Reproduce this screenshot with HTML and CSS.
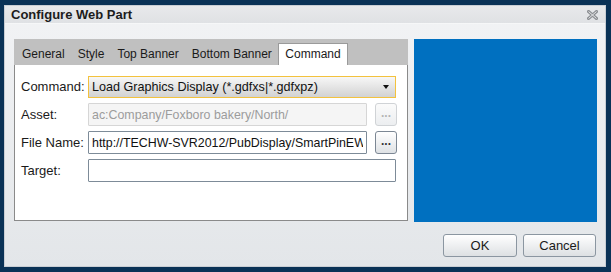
FILE: index.html
```html
<!DOCTYPE html>
<html>
<head>
    <link rel="stylesheet" href="styles.css">
</head>
<body>
    <div class="dialog">
        <div class="titlebar">
            <span class="title">Configure Web Part</span>
            <svg class="close" width="11" height="10" viewBox="0 0 11 10">
                <path d="M1.5 1.5 L9.5 8.5 M9.5 1.5 L1.5 8.5" stroke="#8c8f93" stroke-width="3" stroke-linecap="square"/>
                <path d="M1.5 1.5 L9.5 8.5 M9.5 1.5 L1.5 8.5" stroke="#e4e5e7" stroke-width="1"/>
            </svg>
        </div>
        <div class="body">
            <div class="main">
                <div class="tabs">
                    <div class="tabbar">
                        <span class="tab">General</span>
                        <span class="tab">Style</span>
                        <span class="tab">Top Banner</span>
                        <span class="tab">Bottom Banner</span>
                        <span class="tab active">Command</span>
                    </div>
                    <div class="panel">
                        <div class="row">
                            <label>Command:</label>
                            <div class="select">
                                <span>Load Graphics Display (*.gdfxs|*.gdfxpz)</span>
                                <span class="arrow"></span>
                            </div>
                        </div>
                        <div class="row">
                            <label>Asset:</label>
                            <input type="text" class="field short" value="ac:Company/Foxboro bakery/North/" disabled>
                            <button type="button" class="dots" disabled>...</button>
                        </div>
                        <div class="row">
                            <label>File Name:</label>
                            <input type="text" class="field short" value="http://TECHW-SVR2012/PubDisplay/SmartPinEW">
                            <button type="button" class="dots">...</button>
                        </div>
                        <div class="row">
                            <label>Target:</label>
                            <input type="text" class="field" value="">
                        </div>
                    </div>
                </div>
                <div class="preview"></div>
            </div>
            <div class="footer">
                <button type="button" class="btn ok">OK</button>
                <button type="button" class="btn cancel">Cancel</button>
            </div>
        </div>
    </div>
</body>
</html>
```

FILE: styles.css
```css
body {
    font-family: "Liberation Sans", Arial, sans-serif;
    background-color: #0a3256;
    margin: 0;
    padding: 5px 6px 5px 4px;
}
.dialog {
    width: 600px;
    height: 260px;
    border: 1px solid #c9ced4;
    background: linear-gradient(#f2f3f5, #e3e6e9);
    display: flex;
    flex-direction: column;
}
.titlebar {
    height: 17px;
    display: flex;
    align-items: center;
    justify-content: space-between;
    padding: 0 7px 0 6px;
    background: linear-gradient(#e8e9eb, #dfe1e4);
    border-bottom: 1px solid #f6f7f8;
}
.title {
    font-size: 13px;
    font-weight: bold;
    color: #1c1c1c;
}
.close {
    margin-top: 1px;
}
.body {
    flex: 1;
    display: flex;
    flex-direction: column;
    padding: 15px 7px 0 9px;
}
.main {
    display: flex;
    gap: 6px;
}
.tabs {
    width: 394px;
    height: 182px;
    display: flex;
    flex-direction: column;
}
.tabbar {
    height: 26px;
    background-color: #c0c0c0;
    display: flex;
    align-items: flex-end;
    padding-left: 1.5px;
    box-sizing: border-box;
}
.tab {
    font-size: 12px;
    color: #1a1a1a;
    padding: 0 6.5px 4px;
    line-height: 14px;
}
.tab.active {
    background-color: #fff;
    border: 1px solid #9a9a9a;
    border-bottom: none;
    height: 22px;
    box-sizing: border-box;
    padding: 3px 6px 0;
}
.panel {
    flex: 1;
    background-color: #fff;
    border: 1px solid #8a8a8a;
    border-top: none;
    padding: 10px 10px 0 6px;
}
.row {
    display: flex;
    align-items: center;
    height: 23px;
    margin-bottom: 5px;
}
.row label {
    width: 67px;
    font-size: 13px;
    color: #1a1a1a;
}
.select {
    width: 308px;
    height: 22px;
    box-sizing: border-box;
    border: 1px solid #f3c23e;
    background: linear-gradient(#f7f7f7, #d2d2d2);
    display: flex;
    align-items: center;
    justify-content: space-between;
    padding: 0 6px 0 3px;
    font-size: 12.6px;
    color: #111;
}
.arrow {
    width: 0;
    height: 0;
    border-left: 3px solid transparent;
    border-right: 3px solid transparent;
    border-top: 4px solid #111;
}
.field {
    width: 308px;
    height: 23px;
    box-sizing: border-box;
    border: 1px solid #7d8b98;
    border-radius: 1px;
    padding: 0 3px;
    font-family: "Liberation Sans", Arial, sans-serif;
    font-size: 12.4px;
    color: #111;
    background-color: #fff;
    margin: 0;
}
.field.short {
    width: 279px;
}
.field:disabled {
    border-color: #d6d6d6;
    background-color: #f5f5f5;
    color: #9c9c9c;
}
.dots {
    width: 22px;
    height: 23px;
    margin: 0 0 0 8px;
    padding: 0 0 4px;
    border: 1px solid #7c8794;
    border-radius: 3px;
    background: linear-gradient(#ffffff, #dfe2e5);
    font-family: "Liberation Sans", Arial, sans-serif;
    font-size: 12px;
    font-weight: bold;
    color: #333;
    line-height: 10px;
}
.dots:disabled {
    border-color: #d0d3d6;
    background: linear-gradient(#fbfbfb, #eceef0);
    color: #b4b4b4;
}
.preview {
    width: 183px;
    height: 183px;
    background-color: #0070c0;
}
.footer {
    display: flex;
    justify-content: flex-end;
    gap: 6px;
    padding: 12px 2px 0 0;
}
.btn {
    height: 23px;
    border: 1px solid #8b96a1;
    border-radius: 3px;
    background: linear-gradient(#ffffff, #dde0e3);
    font-family: "Liberation Sans", Arial, sans-serif;
    font-size: 13px;
    color: #1a1a1a;
    padding: 0;
}
.btn.ok {
    width: 74px;
}
.btn.cancel {
    width: 73px;
}
```
